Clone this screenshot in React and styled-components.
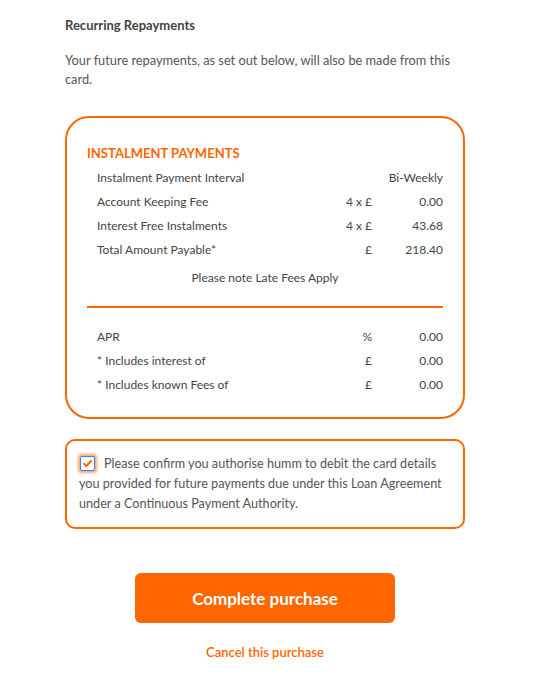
import React from "react";
import styled, { createGlobalStyle } from "styled-components";

const Global = createGlobalStyle`
  html, body { margin: 0; padding: 0; background: #fff; }
  body { font-family: Lato, "Open Sans", Arial, sans-serif; color: #444; }
`;

const ORANGE = "#ff6600";

const Page = styled.div`
  width: 400px;
  padding: 16px 0 40px 65px;
`;

const Title = styled.h3`
  margin: 0;
  font-size: 13px;
  line-height: 18px;
  font-weight: 700;
  color: #444;
`;

const Intro = styled.p`
  margin: 17px 0 0;
  font-size: 12.8px;
  line-height: 19px;
  color: #555;
`;

const Card = styled.section`
  margin-top: 27px;
  border: 2px solid ${ORANGE};
  border-radius: 24px;
  padding: 26px 20px 21px;
`;

const CardTitle = styled.h4`
  margin: 0 0 3px;
  font-size: 13px;
  line-height: 18px;
  font-weight: 700;
  color: ${ORANGE};
  text-transform: uppercase;
`;

const Row = styled.div`
  display: grid;
  grid-template-columns: 1fr 80px 71px;
  padding-left: 10px;
  height: 24px;
  align-items: center;
  font-size: 12px;
  color: #444;
`;

const Cell = styled.span`
  text-align: ${(p) => (p.$right ? "right" : "left")};
  white-space: nowrap;
`;

const Note = styled.div`
  margin-top: 5px;
  text-align: center;
  font-size: 12px;
  line-height: 24px;
  color: #444;
`;

const Divider = styled.hr`
  margin: 16px 0;
  border: 0;
  height: 2px;
  background: ${ORANGE};
`;

const ConsentBox = styled.label`
  display: block;
  margin-top: 20px;
  border: 2px solid ${ORANGE};
  border-radius: 10px;
  padding: 13px 10px 13px 12px;
  font-size: 12.65px;
  line-height: 20px;
  color: #555;
`;

const Check = styled.span`
  display: inline-block;
  vertical-align: -3px;
  width: 13px;
  height: 13px;
  margin: 0 9px 0 1px;
  border: 1px solid #3b82f6;
  border-radius: 2px;
  background: #fff;
  box-shadow: 0 0 3px 1.5px rgba(255, 102, 0, 0.6);
  position: relative;
  svg { position: absolute; left: 1px; top: 1px; }
`;

const Actions = styled.div`
  display: flex;
  flex-direction: column;
  align-items: center;
  margin-top: 44px;
`;

const Button = styled.button`
  width: 260px;
  height: 50px;
  border: 0;
  border-radius: 6px;
  background: ${ORANGE};
  color: #fff;
  font-family: inherit;
  font-size: 17px;
  font-weight: 700;
  cursor: pointer;
`;

const CancelLink = styled.a`
  margin-top: 19px;
  font-size: 13px;
  line-height: 20px;
  font-weight: 600;
  color: ${ORANGE};
  text-decoration: none;
`;

const topRows = [
  ["Instalment Payment Interval", "", "Bi-Weekly"],
  ["Account Keeping Fee", "4 x £", "0.00"],
  ["Interest Free Instalments", "4 x £", "43.68"],
  ["Total Amount Payable*", "£", "218.40"],
];

const bottomRows = [
  ["APR", "%", "0.00"],
  ["* Includes interest of", "£", "0.00"],
  ["* Includes known Fees of", "£", "0.00"],
];

const DataRow = ({ r }) => (
  <Row>
    <Cell>{r[0]}</Cell>
    <Cell $right>{r[1]}</Cell>
    <Cell $right>{r[2]}</Cell>
  </Row>
);

export default function App() {
  return (
    <>
      <Global />
      <Page>
        <Title>Recurring Repayments</Title>
        <Intro>
          Your future repayments, as set out below, will also be made from this card.
        </Intro>
        <Card>
          <CardTitle>Instalment Payments</CardTitle>
          {topRows.map((r) => (
            <DataRow key={r[0]} r={r} />
          ))}
          <Note>Please note Late Fees Apply</Note>
          <Divider />
          {bottomRows.map((r) => (
            <DataRow key={r[0]} r={r} />
          ))}
        </Card>
        <ConsentBox>
          <Check>
            <svg width="11" height="11" viewBox="0 0 11 11">
              <path d="M2 5.8 L4.4 8 L9 3" fill="none" stroke={ORANGE} strokeWidth="2" strokeLinecap="round" strokeLinejoin="round" />
            </svg>
          </Check>
          Please confirm you authorise humm to debit the card details you provided for future payments due under this Loan Agreement under a Continuous Payment Authority.
        </ConsentBox>
        <Actions>
          <Button type="button">Complete purchase</Button>
          <CancelLink href="#">Cancel this purchase</CancelLink>
        </Actions>
      </Page>
    </>
  );
}
